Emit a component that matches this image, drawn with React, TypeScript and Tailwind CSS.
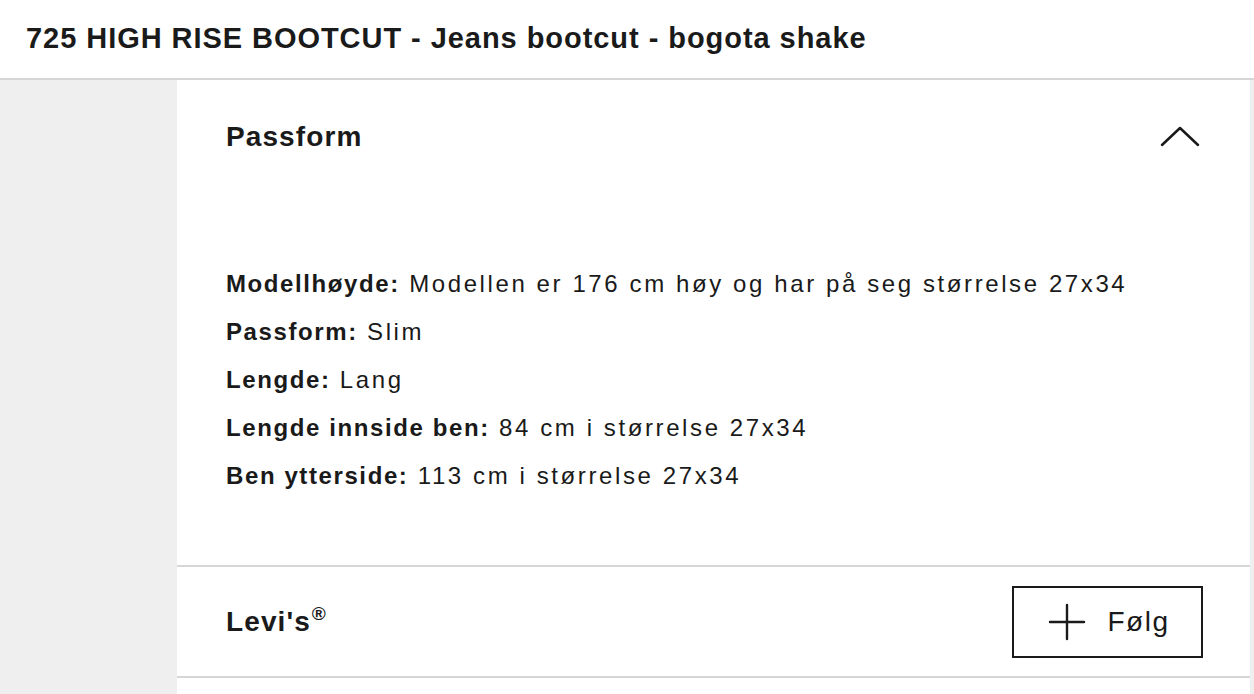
const lines: [string, string][] = [
  ["Modellhøyde:", "Modellen er 176 cm høy og har på seg størrelse 27x34"],
  ["Passform:", "Slim"],
  ["Lengde:", "Lang"],
  ["Lengde innside ben:", "84 cm i størrelse 27x34"],
  ["Ben ytterside:", "113 cm i størrelse 27x34"],
];

export default function App() {
  return (
    <div className="min-h-[694px] bg-white text-[#1a1a1a] font-['Liberation_Sans',Arial,sans-serif]">
      <header className="h-[80px] flex items-center pl-[26px] border-b-2 border-[#d6d6d6]">
        <h1 className="text-[29px] font-bold tracking-[0.95px]">
          725 HIGH RISE BOOTCUT - Jeans bootcut - bogota shake
        </h1>
      </header>
      <div className="flex bg-[#efefef] min-h-[614px]">
        <div className="w-[177px] shrink-0" />
        <main className="flex-1 bg-white">
          <section className="border-b-2 border-[#d6d6d6] pl-[49px] pr-[52px] pb-[65px]">
            <div className="h-[112px] flex items-center justify-between pt-[2px]">
              <h2 className="text-[28px] font-bold tracking-[1.1px]">Passform</h2>
              <svg width="40" height="22" viewBox="0 0 40 22" fill="none" className="mr-[-2px] mt-[-2px]">
                <path d="M2 20 L20 3 L38 20" stroke="#1a1a1a" strokeWidth="2.5" strokeLinecap="round" strokeLinejoin="round" />
              </svg>
            </div>
            <ul className="mt-[68px] text-[24px] leading-[48px] tracking-[2.6px]">
              {lines.map(([k, v]) => (
                <li key={k}>
                  <span className="font-bold tracking-[1.6px]">{k}</span> {v}
                </li>
              ))}
            </ul>
          </section>
          <section className="border-b-2 border-[#d6d6d6] h-[111px] pl-[49px] pr-[47px] flex items-center justify-between">
            <h2 className="text-[28px] font-bold tracking-[1.1px]">
              Levi's<sup className="text-[19px] top-[-0.55em] ml-[1px] tracking-normal">®</sup>
            </h2>
            <button className="w-[191px] h-[72px] pl-[2px] border-2 border-[#1a1a1a] flex items-center justify-center gap-[22px] text-[28px] tracking-[1.5px]">
              <svg width="38" height="38" viewBox="0 0 38 38" fill="none">
                <path d="M19 2 V36 M2 19 H36" stroke="#1a1a1a" strokeWidth="2.4" strokeLinecap="round" />
              </svg>
              <span>Følg</span>
            </button>
          </section>
        </main>
        <div className="w-[4px] shrink-0" />
      </div>
    </div>
  );
}
